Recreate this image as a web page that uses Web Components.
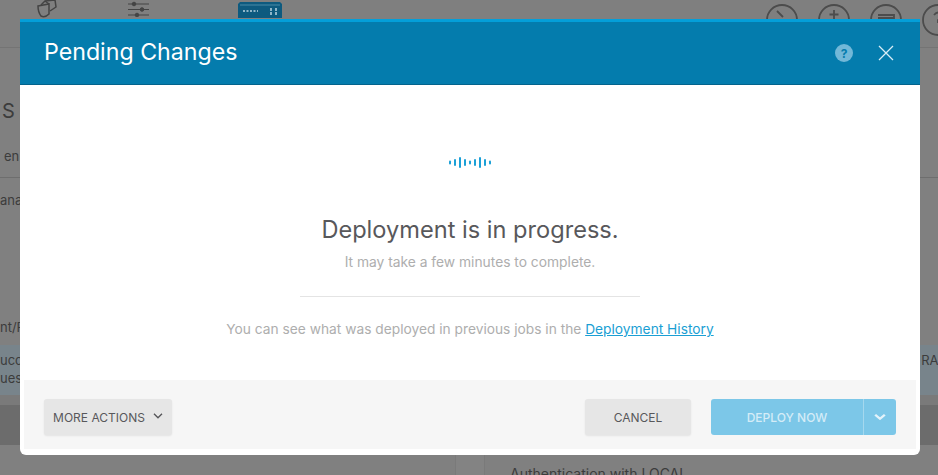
<!DOCTYPE html>
<html>
<head>
<meta charset="utf-8">
<title>Pending Changes</title>
<style>
  html, body { margin: 0; height: 100%; }
  body { width: 938px; height: 475px; overflow: hidden; position: relative; font-family: "Inter", "Liberation Sans", sans-serif; }
</style>
</head>
<body>
<app-backdrop></app-backdrop>
<pending-modal>
  <deploy-status></deploy-status>
  <modal-footer slot="footer"></modal-footer>
</pending-modal>

<script>
class AppBackdrop extends HTMLElement {
  constructor() {
    super();
    this.attachShadow({ mode: 'open' });
    this.shadowRoot.innerHTML = `
      <style>
        :host { display: flex; flex-direction: column; width: 938px; height: 475px; background: #808080; color: #3c3c3c; font-size: 13px; overflow: hidden; }
        .nav { display: flex; align-items: flex-start; height: 48px; flex: none; border-bottom: 1px solid #747474; box-sizing: border-box; background: #7f7f7f; }
        .nav svg { display: block; flex: none; }
        .shield { margin: 0 0 0 36px; }
        .sliders { margin: 1px 0 0 71px; }
        .device { margin: 2px 0 0 89px; }
        .round { margin: 4px 0 0 20px; }
        .first { margin-left: 484px; }
        .title { height: 87px; display: flex; align-items: center; font-size: 20px; padding: 38px 0 0 2px; flex: none; box-sizing: border-box; }
        .row { flex: none; display: flex; justify-content: space-between; white-space: nowrap; box-sizing: border-box; }
        .head { height: 43px; align-items: center; border-bottom: 1px solid #6e6e6e; padding-left: 4px; }
        .plain { height: 44px; align-items: center; }
        .spacer { height: 93px; flex: none; }
        .resource { height: 30px; align-items: center; padding-bottom: 6px; }
        .hit { height: 50px; background: #78848b; line-height: 18px; padding-top: 6px; }
        .hit span:last-child { margin-right: -4px; }
        .gap { height: 10px; flex: none; background: #7a7a7a; }
        .dark { height: 40px; flex: none; background: #6c6c6c; }
        .bottom { flex: 1; display: flex; font-size: 14px; }
        .gutter { margin-left: 455px; width: 30px; box-sizing: border-box; background: #838383; border: solid #7a7a7a; border-width: 0 1px; }
        .bottom p { margin: 0 0 0 25px; padding-top: 21px; line-height: 16px; white-space: nowrap; }
      </style>
      <div class="nav">
        <svg class="shield" width="21" height="18" viewBox="0 0 21 18" fill="none" stroke="#444" stroke-width="1.500">
          <path d="M2 6 L13 4 V14 Q9 18 5 16 Q2 12 2 6 Z"/><path d="M5 5 L9 1 L19 0 L20 7 L14 11"/><path d="M9 1 L13 4"/>
        </svg>
        <svg class="sliders" width="21" height="16" viewBox="0 0 21 16" stroke="#444" stroke-width="1" fill="#444">
          <path d="M0 3H21M0 8.500H21M0 14H21"/><circle cx="6" cy="3" r="1.800"/><circle cx="14" cy="8.500" r="1.800"/><circle cx="9" cy="14" r="1.800"/>
        </svg>
        <svg class="device" width="44" height="16" viewBox="0 0 44 16">
          <path d="M2 0H42L44 2V16H0V2Z" fill="#0d5a7f"/><path d="M2 3H42" stroke="#4b8aa8"/>
          <path d="M5 9H20" stroke="#8fb6c9" stroke-width="2" stroke-dasharray="2 1.500"/><path d="M33 6V13M38 6V13" stroke="#8fb6c9" stroke-width="2" stroke-dasharray="3 1"/>
        </svg>
        <svg class="round first" width="32" height="32" viewBox="0 0 32 32" fill="none" stroke="#4c4c4c" stroke-width="1.800"><circle cx="16" cy="16" r="15"/><path d="M11 7L17 13"/></svg>
        <svg class="round" width="32" height="32" viewBox="0 0 32 32" fill="none" stroke="#4c4c4c" stroke-width="1.800"><circle cx="16" cy="16" r="15"/><path d="M16 6V15M11.500 10.500H20.500"/></svg>
        <svg class="round" width="32" height="32" viewBox="0 0 32 32" fill="none" stroke="#4c4c4c" stroke-width="1.800"><circle cx="16" cy="16" r="15"/><path d="M8 11H24V14H8"/></svg>
        <svg class="round" width="32" height="32" viewBox="0 0 32 32" fill="none" stroke="#4c4c4c" stroke-width="1.800"><circle cx="16" cy="16" r="15"/><path d="M12 11Q16 6 20 11Q20 14 16 16V19"/></svg>
      </div>
      <div class="title">S</div>
      <div class="row head"><span>en</span></div>
      <div class="row plain"><span>ana</span></div>
      <div class="spacer"></div>
      <div class="row resource"><span>nt/R</span></div>
      <div class="row hit"><span>ucc<br>ues</span><span>RAI</span></div>
      <div class="gap"></div>
      <div class="dark"></div>
      <div class="bottom"><div class="gutter"></div><p>Authentication with LOCAL</p></div>
    `;
  }
}

class PendingModal extends HTMLElement {
  constructor() {
    super();
    this.attachShadow({ mode: 'open' });
    this.shadowRoot.innerHTML = `
      <style>
        :host { position: absolute; left: 20px; top: 19px; width: 900px; height: 436px; display: flex; flex-direction: column; background: #fff; border-radius: 0 0 6px 6px; overflow: hidden; }
        header { height: 66px; flex: none; box-sizing: border-box; background: #047cad; border-top: 3px solid #049fd9; border-bottom: 1px solid #03638c; display: flex; align-items: center; padding: 0 24px; color: #fff; }
        h2 { margin: -2px 0 0; font-weight: 400; font-size: 23.2px; flex: 1; }
        .help { width: 18px; height: 18px; border-radius: 50%; background: #72b8d8; color: #047cad; font-size: 12px; font-weight: 700; display: flex; align-items: center; justify-content: center; margin-right: 25px; }
        header svg { display: block; margin-right: 2px; }
        main { flex: 1; }
        ::slotted([slot="footer"]) { flex: none; }
      </style>
      <header>
        <h2>Pending Changes</h2>
        <span class="help">?</span>
        <svg width="16" height="16" viewBox="0 0 16 16" fill="none" stroke="#d8edf6" stroke-width="1.300"><path d="M1 1L15 15M15 1L1 15"/></svg>
      </header>
      <main><slot></slot></main>
      <slot name="footer"></slot>
    `;
  }
}

class DeployStatus extends HTMLElement {
  constructor() {
    super();
    this.attachShadow({ mode: 'open' });
    const heights = [4, 7, 11, 7, 4, 7, 11, 7, 4];
    const bars = heights.map((h, i) => `<rect x="${i * 5}" y="${(11 - h) / 2}" width="2" height="${h}" rx="1"/>`).join('');
    this.shadowRoot.innerHTML = `
      <style>
        :host { display: flex; flex-direction: column; align-items: center; height: 100%; text-align: center; }
        svg { display: block; margin-top: 72px; fill: #1ba0d7; }
        h3 { margin: 48px 0 0; font-weight: 400; font-size: 23.6px; line-height: 28px; color: #58585b; }
        .sub { margin: 9px 0 0; font-size: 13.8px; line-height: 18px; color: #aeaeae; }
        hr { width: 340px; margin: 25px 0 0; border: 0; border-top: 1px solid #e4e4e4; }
        .hist { margin: 23px 0 0; font-size: 13.76px; line-height: 18px; color: #aeaeae; }
        a { color: #1b9fd4; text-decoration: underline; }
      </style>
      <svg width="42" height="11" viewBox="0 0 42 11">${bars}</svg>
      <h3>Deployment is in progress.</h3>
      <p class="sub">It may take a few minutes to complete.</p>
      <hr>
      <p class="hist">You can see what was deployed in previous jobs in the <a href="#">Deployment History</a></p>
    `;
  }
}

class ModalFooter extends HTMLElement {
  constructor() {
    super();
    this.attachShadow({ mode: 'open' });
    const chev = (c, w, size) => `<svg width="${size}" height="6" viewBox="0 0 10 6" preserveAspectRatio="none" fill="none" stroke="${c}" stroke-width="${w}"><path d="M1 .8L5 4.800L9 .8"/></svg>`;
    this.shadowRoot.innerHTML = `
      <style>
        :host { display: flex; align-items: flex-start; height: 69px; margin: 0 4px 6px; box-sizing: border-box; background: #f6f6f6; padding: 19px 20px 0; font-size: 12px; }
        .btn { display: flex; align-items: center; justify-content: center; box-sizing: border-box; height: 36px; border-radius: 3px; background: #e6e6e6; color: #58585b; }
        .more { width: 128px; gap: 8px; box-shadow: 0 1px 2px rgba(0,0,0,.08); }
        .more svg { margin-top: -3px; }
        .cancel { width: 106px; margin-left: auto; box-shadow: 0 1px 2px rgba(0,0,0,.08); }
        .deploy { margin-left: 20px; display: flex; height: 36px; background: #7cc7e8; border-radius: 3px; color: #d4ecf7; font-weight: 500; }
        .deploy span { width: 152px; display: flex; align-items: center; justify-content: center; border-right: 1px solid #a5d8ee; }
        .deploy i { width: 32px; display: flex; align-items: center; justify-content: center; }
      </style>
      <div class="btn more">MORE ACTIONS ${chev('#58585b', 1.4, 10)}</div>
      <div class="btn cancel">CANCEL</div>
      <div class="deploy"><span>DEPLOY NOW</span><i>${chev('#e4f3fa', 2, 12)}</i></div>
    `;
  }
}

customElements.define('app-backdrop', AppBackdrop);
customElements.define('pending-modal', PendingModal);
customElements.define('deploy-status', DeployStatus);
customElements.define('modal-footer', ModalFooter);
</script>
</body>
</html>
